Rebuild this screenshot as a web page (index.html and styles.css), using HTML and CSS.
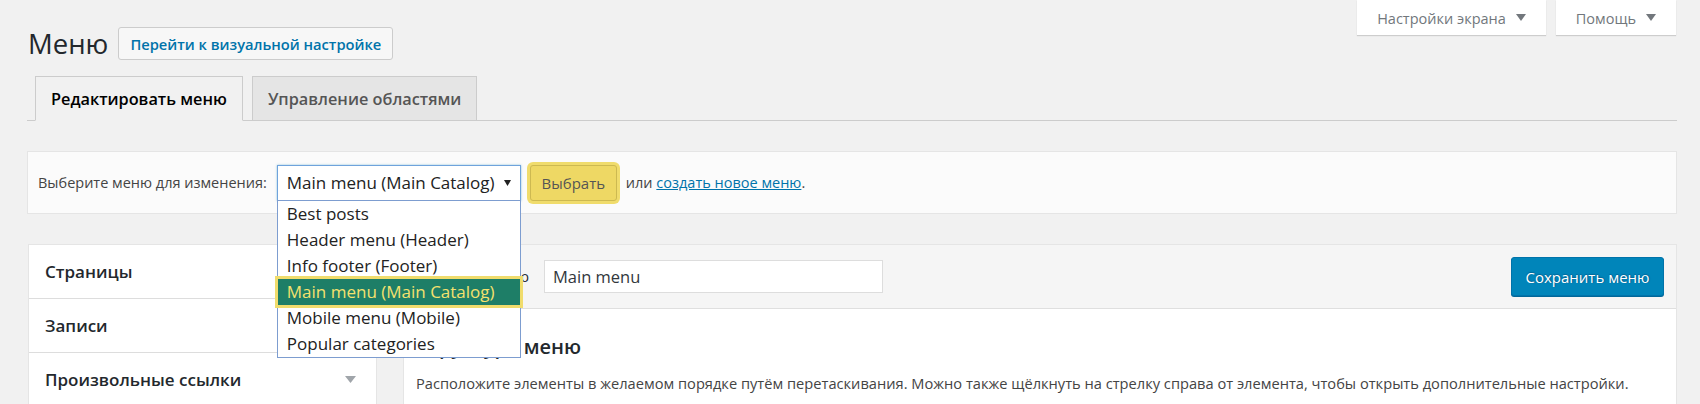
FILE: index.html
```html
<!DOCTYPE html>
<html lang="ru">
  <head>
    <meta charset="UTF-8" />
    <meta name="viewport" content="width=device-width, initial-scale=1.0" />
    <link rel="stylesheet" href="styles.css">
    <title>Меню</title>
  </head>
  <body>
    <div class="wrap">
      <div class="top">
        <div class="title-row">
          <h1 class="page-title">Меню</h1>
          <a class="title-action" href="#">Перейти к визуальной настройке</a>
        </div>
        <div class="screen-meta">
          <button class="meta-link">Настройки экрана
            <svg width="10" height="7" viewBox="0 0 10 7"><path d="M0 0h10L5 7z" fill="#72777c"/></svg>
          </button>
          <button class="meta-link">Помощь
            <svg width="10" height="7" viewBox="0 0 10 7"><path d="M0 0h10L5 7z" fill="#72777c"/></svg>
          </button>
        </div>
      </div>

      <nav class="tabs">
        <a class="tab active" href="#">Редактировать меню</a>
        <a class="tab" href="#">Управление областями</a>
      </nav>

      <!-- choose menu -->
      <div class="manage-menus">
        <span class="manage-label">Выберите меню для изменения:</span>
        <div class="select">
          <span>Main menu (Main Catalog)</span>
          <svg width="7" height="6" viewBox="0 0 7 6"><path d="M0 0h7L3.5 6z" fill="#222"/></svg>
          <ul class="options">
            <li>Best posts</li>
            <li>Header menu (Header)</li>
            <li>Info footer (Footer)</li>
            <li class="selected">Main menu (Main Catalog)</li>
            <li>Mobile menu (Mobile)</li>
            <li>Popular categories</li>
          </ul>
        </div>
        <button class="btn-choose">Выбрать</button>
        <span class="or-text">или <a href="#">создать новое меню</a>.</span>
      </div>

      <div class="columns">
        <div class="side">
          <div class="side-row">Страницы</div>
          <div class="side-row">Записи</div>
          <div class="side-row">Произвольные ссылки
            <svg width="11" height="7" viewBox="0 0 11 7"><path d="M0 0h11L5.5 7z" fill="#a0a5aa"/></svg>
          </div>
        </div>

        <div class="edit">
          <div class="edit-header">
            <label class="name-label">Название меню</label>
            <input class="name-input" type="text" value="Main menu" />
            <button class="btn-save">Сохранить меню</button>
          </div>
          <div class="edit-body">
            <h3 class="edit-title">Структура меню</h3>
            <p class="edit-desc">Расположите элементы в желаемом порядке путём перетаскивания. Можно также щёлкнуть на стрелку справа от элемента, чтобы открыть дополнительные настройки.</p>
          </div>
        </div>
      </div>
    </div>
  </body>
</html>
```

FILE: styles.css
```css
:root {
  --bg: #f1f1f1;
  --border: #e5e5e5;
  --link: #0073aa;
  --text: #23282d;
}

body {
  margin: 0;
  background: var(--bg);
  font-family: "Open Sans", "Noto Sans", sans-serif;
  font-size: 14.5px;
  color: #444;
  overflow: hidden;
}

.wrap {
  padding: 0 23px 0 27px;
}

/* top row */
.top {
  display: flex;
  justify-content: space-between;
  align-items: flex-start;
}

.title-row {
  display: flex;
  align-items: center;
  gap: 10px;
  padding-top: 27px;
}

.page-title {
  margin: 0 0 0 1px;
  font-size: 27.5px;
  font-weight: 400;
  line-height: 33px;
  color: var(--text);
}

.title-action {
  display: flex;
  align-items: center;
  height: 31px;
  padding: 0 11px;
  border: 1px solid #ccc;
  border-radius: 3px;
  background: #f7f7f7;
  color: var(--link);
  font-weight: 600;
  font-size: 14.7px;
  text-decoration: none;
}

.screen-meta {
  display: flex;
  gap: 10px;
  margin-right: 1px;
}

.meta-link {
  display: flex;
  align-items: center;
  gap: 10px;
  height: 35px;
  padding: 2px 20px 0;
  border: 0;
  background: #fff;
  box-shadow: 0 1px 1px rgba(0, 0, 0, 0.15);
  font-family: inherit;
  font-size: 14.5px;
  color: #72777c;
}

.meta-link svg {
  margin-top: -3px;
}

/* tabs */
.tabs {
  display: flex;
  gap: 9px;
  margin-top: 16px;
  padding-left: 8px;
  height: 44px;
  border-bottom: 1px solid #ccc;
}

.tab {
  display: flex;
  align-items: center;
  height: 43px;
  padding: 0 15px;
  border: 1px solid #ccc;
  background: #e5e5e5;
  color: #555;
  font-size: 16.3px;
  font-weight: 600;
  text-decoration: none;
}

.tab.active {
  background: var(--bg);
  border-bottom-color: var(--bg);
  color: #000;
}

/* manage menus */
.manage-menus {
  display: flex;
  align-items: center;
  height: 61px;
  margin-top: 30px;
  padding: 0 10px;
  border: 1px solid var(--border);
  background: #fbfbfb;
}

.manage-label {
  color: #444;
}

.select {
  position: relative;
  display: flex;
  align-items: center;
  justify-content: space-between;
  box-sizing: border-box;
  width: 244px;
  height: 36px;
  margin-left: 10px;
  padding: 0 9px 0 9px;
  border: 1px solid #6fa3dc;
  box-shadow: 0 0 2px rgba(30, 140, 190, 0.5);
  background: #fff;
  color: #222;
  font-size: 17px;
}

.options {
  position: absolute;
  top: 34px;
  left: -1px;
  width: 244px;
  box-sizing: border-box;
  margin: 0;
  padding: 0;
  list-style: none;
  border: 1px solid #7d9dd0;
  background: #fff;
  z-index: 5;
}

.options li {
  height: 26px;
  line-height: 26px;
  padding-left: 9px;
  color: #222;
}

.options li.selected {
  background: #1e7e67;
  color: #f5e16e;
  box-shadow: 0 0 0 3px #f0dc6c;
  position: relative;
}

.btn-choose {
  height: 36px;
  width: 87px;
  margin-left: 9px;
  border: 1px solid #cdb951;
  border-radius: 3px;
  background: #eed864;
  box-shadow: 0 0 0 3px #f0dc6c;
  font-family: inherit;
  font-size: 15px;
  color: #555;
}

.or-text {
  margin-left: 9px;
}

.or-text a {
  color: var(--link);
}

/* columns */
.columns {
  display: flex;
  gap: 26px;
  margin-top: 30px;
  align-items: flex-start;
}

.side {
  box-sizing: border-box;
  width: 349px;
  margin-left: 1px;
  border: 1px solid var(--border);
  border-bottom: 0;
  background: #fff;
}

.side-row {
  display: flex;
  align-items: center;
  justify-content: space-between;
  height: 53px;
  padding: 0 20px 0 16px;
  border-bottom: 1px solid #ddd;
  font-size: 17px;
  font-weight: 600;
  color: var(--text);
}

.edit {
  flex: 1;
  border: 1px solid var(--border);
  border-bottom: 0;
  background: #fff;
}

.edit-header {
  display: flex;
  align-items: center;
  height: 63px;
  padding: 0 12px;
  border-bottom: 1px solid #dfdfdf;
  background: #f5f5f5;
}

.name-label {
  width: 113px;
  margin-right: 15px;
  text-align: right;
  color: #23282d;
}

.name-input {
  box-sizing: border-box;
  width: 339px;
  height: 33px;
  padding: 0 8px;
  border: 1px solid #ddd;
  background: #fff;
  font-family: inherit;
  font-size: 16.5px;
  color: #32373c;
}

.btn-save {
  margin-left: auto;
  width: 153px;
  height: 39px;
  border: 1px solid #0073aa;
  border-radius: 3px;
  background: #0085ba;
  box-shadow: 0 1px 0 #006799;
  text-shadow: 0 -1px 1px #006799, 1px 0 1px #006799;
  font-family: inherit;
  font-size: 15px;
  color: #fff;
}

.edit-body {
  padding: 26px 12px 0;
  height: 200px;
}

.edit-title {
  margin: 0;
  font-size: 20px;
  font-weight: 600;
  line-height: 24px;
  color: var(--text);
}

.edit-desc {
  margin: 14px 0 0;
  font-size: 14.65px;
  line-height: 20px;
  color: #444;
}
```
